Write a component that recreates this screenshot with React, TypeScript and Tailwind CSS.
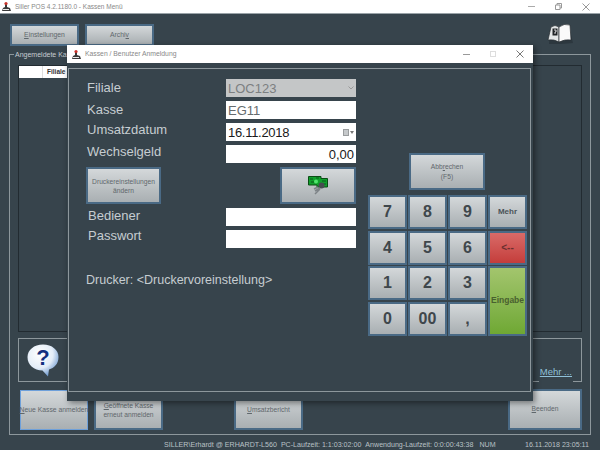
const btn = "flex items-center justify-center text-center border-2 border-[#4a6a85] bg-gradient-to-b from-[#d4d8da] to-[#a9afb2] text-[#5f676c]"

function Logo() {
  return (
    <svg width="11" height="11" viewBox="0 0 11 11" className="shrink-0">
      <path d="M1 10 L10 10 L9 7 L6 6 L6 3 L4 3 L4 6 L2 7 Z" fill="#3a3a3a" />
      <circle cx="5" cy="2.5" r="1.6" fill="#c8332b" />
      <rect x="2" y="8" width="6" height="1" fill="#e8e8e8" />
    </svg>
  )
}

function Minimize({ color }: { color: string }) {
  return <svg width="7" height="7" viewBox="0 0 7 7"><path d="M0 3.5 H7" stroke={color} /></svg>
}

function Close({ color }: { color: string }) {
  return <svg width="8" height="8" viewBox="0 0 8 8"><path d="M0.5 0.5 L7.5 7.5 M7.5 0.5 L0.5 7.5" stroke={color} fill="none" /></svg>
}

function Restore({ color }: { color: string }) {
  return (
    <svg width="7" height="7" viewBox="0 0 7 7">
      <path d="M0.5 2 H5 V6.5 H0.5 Z M2 2 V0.5 H6.5 V5 H5" stroke={color} fill="none" />
    </svg>
  )
}

function BookIcon() {
  return (
    <svg width="26" height="20" viewBox="0 0 26 20">
      <path d="M3 6 L13 3 L22 3 L26 19 L14 20 L2 20 Z" fill="#1f282e" opacity="0.45" />
      <path d="M1 16 L4 3 Q8 0 12 3 L12 18 Q7 15 1 16 Z" fill="#e4e7e7" stroke="#2a2f33" strokeWidth="0.7" />
      <path d="M12 3 Q17 -1 23 1 L24 16 Q18 15 12 18 Z" fill="#fafafa" stroke="#2a2f33" strokeWidth="0.7" />
      <rect x="5.5" y="4.5" width="5" height="7" fill="#202427" />
      <path d="M7 6 H9 V8 H8 V10" stroke="#fff" strokeWidth="0.8" fill="none" />
    </svg>
  )
}

function QuestionIcon() {
  return (
    <svg width="32" height="33" viewBox="0 0 32 33">
      <defs>
        <radialGradient id="bubble" cx="0.38" cy="0.3" r="0.8">
          <stop offset="0" stopColor="#ffffff" />
          <stop offset="0.55" stopColor="#e3edf8" />
          <stop offset="1" stopColor="#4f83c4" />
        </radialGradient>
      </defs>
      <path d="M16 0.5 C25 0.5 31.5 6 31.5 13 C31.5 20 27 24 22 25.5 L21 32.5 L15.5 26.5 C7 26.5 0.5 21 0.5 13 C0.5 6 7 0.5 16 0.5 Z" fill="url(#bubble)" />
      <text x="16" y="21" textAnchor="middle" fontSize="22" fontWeight="700" fill="#12307f" fontFamily="'Liberation Sans', sans-serif">?</text>
    </svg>
  )
}

function MoneyIcon() {
  return (
    <svg width="20" height="19" viewBox="0 0 20 19">
      <path d="M0.5 0.5 H13 V2.5 H19.5 V11 H9 V9 H0.5 Z" fill="#10a02c" stroke="#0a4d14" />
      <path d="M2 3 H5 M3 6 H6 M14 5 H18 M15 8 H18 M8 2 H11" stroke="#0a5a1a" strokeWidth="1" />
      <circle cx="8" cy="5.5" r="2" fill="#4fe56c" />
      <circle cx="13.5" cy="9.5" r="3" fill="#474c50" />
      <path d="M10 11 L6 13 M12 12 L7 15 M12 13 L7 18" stroke="#7d8387" strokeWidth="1.5" fill="none" />
    </svg>
  )
}

function Field({ label, value, tone = "white", right, align = "left", lift = "pl-[1px]", valueClass = "" }: {
  label: string
  value?: string
  tone?: "white" | "grey" | "soft"
  right?: React.ReactNode
  align?: "left" | "right"
  lift?: string
  valueClass?: string
}) {
  return (
    <div className="flex items-center h-[18px]">
      <span className={`w-[140px] text-[13px] leading-[16px] text-[#c6cdd1] ${lift}`}>{label}</span>
      <div
        className={`w-[130px] h-[18px] flex items-center px-[2px] text-[13px] leading-none ${
          tone === "grey" ? "bg-[#c4c6c7] text-[#7c7f81]" : tone === "soft" ? "bg-white text-[#666b6e]" : "bg-white text-[#1a1a1a]"
        } ${align === "right" ? "justify-end" : "justify-between"} ${valueClass}`}
      >
        <span>{value}</span>
        {right}
      </div>
    </div>
  )
}

const keys = [
  { t: "7", cls: "" }, { t: "8", cls: "" }, { t: "9", cls: "" }, { t: "Mehr", cls: "small" },
  { t: "4", cls: "" }, { t: "5", cls: "" }, { t: "6", cls: "" }, { t: "<--", cls: "red" },
  { t: "1", cls: "" }, { t: "2", cls: "" }, { t: "3", cls: "" }, { t: "Eingabe", cls: "green" },
  { t: "0", cls: "" }, { t: "00", cls: "" }, { t: ",", cls: "" },
]

function Keypad() {
  return (
    <div className="grid grid-cols-[39px_39px_39px_39px] grid-rows-[34px_34px_34px_34px] gap-x-[1px] gap-y-[1.5px]">
      {keys.map((k) => {
        if (k.cls === "small") {
          return <div key={k.t} className={`${btn} text-[8px] font-bold !text-[#4a5257]`}>{k.t}</div>
        }
        if (k.cls === "red") {
          return (
            <div key={k.t} className="flex items-center justify-center border-2 border-[#4a6a85] bg-gradient-to-b from-[#d96a68] to-[#c43d3b] text-[10px] font-bold text-[#6b2f2f]">
              {k.t}
            </div>
          )
        }
        if (k.cls === "green") {
          return (
            <div key={k.t} className="row-span-2 flex items-center justify-center border-2 border-[#4a6a85] bg-gradient-to-b from-[#a3c56d] to-[#6fa833] text-[8.5px] font-bold text-[#49602f]">
              {k.t}
            </div>
          )
        }
        return <div key={k.t} className={`${btn} text-[16px] font-bold !text-[#3f474c]`}>{k.t}</div>
      })}
    </div>
  )
}

function LoginDialog() {
  return (
    <div className="absolute left-[67px] top-[45px] w-[466px] h-[356px] bg-[#37444c] shadow-[2px_2px_6px_rgba(0,0,0,0.45)]">
      <div className="h-[18px] bg-white flex items-center pl-[4px] pr-[9px] gap-[3px]">
        <Logo />
        <span className="text-[6.8px] text-[#888]">Kassen / Benutzer Anmeldung</span>
        <div className="ml-auto flex items-center gap-[20px]">
          <Minimize color="#999" />
          <div className="w-[6px] h-[6px] border border-[#ddd]" />
          <Close color="#777" />
        </div>
      </div>
      <div className="mt-[5px] ml-[1px] w-[463px] h-[324px] border border-[#8d979c] flex">
        <div className="w-[299px] pl-[17px] pt-[10px] flex flex-col">
          <div className="flex flex-col gap-[4px]">
            <Field label="Filiale" value="LOC123" tone="grey" right={
              <svg width="6" height="4" viewBox="0 0 6 4"><path d="M0.5 0.5 L3 3 L5.5 0.5" stroke="#999" fill="none" /></svg>
            } />
            <Field label="Kasse" value="EG11" tone="soft" />
            <Field label="Umsatzdatum" value="16.11.2018" lift="pb-[4px] pl-[1px]" valueClass="tracking-[-0.3px]" right={
              <span className="flex items-center gap-[1px]">
                <span className="w-[6px] h-[7px] bg-[#c6c9cb] border border-[#9a9d9f]" />
                <svg width="4" height="3" viewBox="0 0 4 3"><path d="M0 0 H4 L2 3 Z" fill="#777" /></svg>
              </span>
            } />
            <Field label="Wechselgeld" value="0,00" align="right" lift="pb-[4px] pl-[1px]" />
          </div>
          <div className="flex justify-between mt-[4px] w-[270px]">
            <div className={`${btn} w-[75px] h-[37px] text-[6.7px] leading-[9px]`}>Druckereinstellungen<br />ändern</div>
            <div className={`${btn} w-[76px] h-[37px]`}><MoneyIcon /></div>
          </div>
          <div className="flex flex-col gap-[4px] mt-[4px]">
            <Field label="Bediener" lift="pb-[2px] pl-[2px]" />
            <Field label="Passwort" lift="pb-[6px] pl-[2px]" />
          </div>
          <div className="mt-[23px] text-[12.5px] text-[#c6cdd1]">Drucker: &lt;Druckervoreinstellung&gt;</div>
        </div>
        <div className="pt-[84px] flex flex-col">
          <div className={`${btn} ml-[41px] w-[76px] h-[37px] mb-[5px] text-[6.7px] leading-[10px]`}>
            <span>Abb<span className="underline">r</span>echen<br />(F5)</span>
          </div>
          <Keypad />
        </div>
      </div>
    </div>
  )
}

export default function App() {
  return (
    <div className="relative w-[600px] h-[450px] overflow-hidden bg-[#37444c] font-['Liberation_Sans',sans-serif]">
      {/* Main window */}
      <div className="h-[14px] bg-white border-b border-[#9aa3a8] flex items-center pl-[1px] pr-[10px] gap-[3px]">
        <Logo />
        <span className="text-[6.5px] text-[#888]">Siller POS 4.2.1180.0 - Kassen Menü</span>
        <div className="ml-auto flex items-center gap-[20px]">
          <Minimize color="#aaa" />
          <Restore color="#999" />
          <Close color="#999" />
        </div>
      </div>

      <div className="flex items-start justify-between pt-[10px] pl-[10px] pr-[27px] h-[36px]">
        <div className="flex gap-[6px]">
          <div className={`${btn} w-[69px] h-[22px] text-[6.8px]`}><span><span className="underline">E</span>instellungen</span></div>
          <div className={`${btn} w-[69px] h-[22px] text-[6.8px]`}><span>Archi<span className="underline">v</span></span></div>
        </div>
        <BookIcon />
      </div>

      <div className="relative mt-[4px] ml-[9px] w-[582px] h-[381px] border border-[#8d979c] px-[8px] pt-[10px] flex flex-col">
        <span className="absolute -top-[4px] left-[4px] bg-[#37444c] px-[1px] text-[7px] leading-[8px] text-[#c6cdd1]">Angemeldete Kasse</span>
        <div className="h-[267px] border border-[#222b31]">
          <div className="flex h-[12px] w-[48px] bg-white">
            <div className="w-[24px] border-r border-[#ddd]" />
            <span className="pl-[4px] text-[6.5px] font-bold leading-[12px] text-[#333]">Filiale</span>
          </div>
        </div>
        <div className="relative mt-[6px] h-[44px] border border-[#8d979c] flex items-center pl-[8px]">
          <QuestionIcon />
          <span className="absolute right-[8px] -bottom-[1px] bg-[#37444c] px-[1px] pb-[3px] text-[9.5px] leading-[14px] text-[#8fc0d8] underline">Mehr ...</span>
        </div>
        <div className="mt-[7px] flex items-end">
          <div className="ml-[2px] w-[68px] h-[40px] flex items-center justify-center whitespace-nowrap border border-[#6ea0da] bg-gradient-to-b from-[#d4d8da] to-[#a9afb2] text-[6.8px] text-[#5f676c]">
            <span><span className="underline">N</span>eue Kasse anmelden</span>
          </div>
          <div className={`${btn} ml-[6px] w-[69px] h-[40px] text-[6.7px] leading-[9px]`}>
            <span><span className="underline">G</span>eöffnete Kasse<br />erneut anmelden</span>
          </div>
          <div className={`${btn} ml-[71px] w-[69px] h-[40px] text-[6.7px]`}><span><span className="underline">U</span>msatzbericht</span></div>
          <div className={`${btn} ml-auto w-[74px] h-[41px] text-[6.7px]`}><span><span className="underline">B</span>eenden</span></div>
        </div>
      </div>

      <div className="mt-[5px] pl-[164px] pr-[11px] flex items-center text-[7.1px] text-[#b9c1c6] whitespace-nowrap">
        <span>SILLER\Erhardt @ ERHARDT-L560</span>
        <span className="ml-[4px]">PC-Laufzeit: 1:1:03:02:00</span>
        <span className="ml-[4px]">Anwendung-Laufzeit: 0:0:00:43:38</span>
        <span className="ml-[6px]">NUM</span>
        <span className="ml-auto">16.11.2018 23:05:11</span>
      </div>

      <LoginDialog />
    </div>
  )
}
